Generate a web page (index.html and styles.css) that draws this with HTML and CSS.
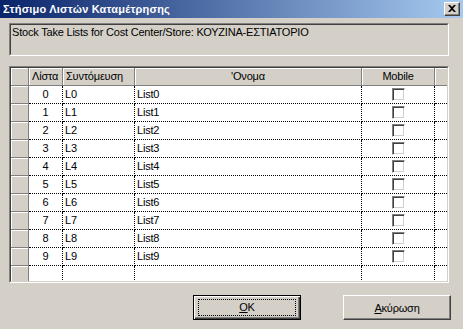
FILE: index.html
```html
<!DOCTYPE html>
<html lang="el">
<head>
    <meta charset="UTF-8">
    <title>Στήσιμο Λιστών Καταμέτρησης</title>
    <link rel="stylesheet" href="styles.css">
</head>
<body>
    <div class="titlebar">
        <span class="title">Στήσιμο Λιστών Καταμέτρησης</span>
        <span class="close-btn">
            <svg width="8" height="7" viewBox="0 0 8 7"><path d="M0 0h2l2 2 2-2h2L5 3.5 8 7H6L4 5 2 7H0l3-3.5z" fill="#000"/></svg>
        </span>
    </div>
    <div class="content">
        <div class="sunken info-box">
            <div class="sunken-inner info-text">Stock Take Lists for Cost Center/Store: ΚΟΥΖΙΝΑ-ΕΣΤΙΑΤΟΡΙΟ</div>
        </div>
        <div class="sunken grid-box">
            <div class="sunken-inner grid">
                <div class="row head">
                    <div class="cell hcell"></div>
                    <div class="cell hcell clip">Λίστα</div>
                    <div class="cell hcell left">Συντόμευση</div>
                    <div class="cell hcell">'Ονομα</div>
                    <div class="cell hcell">Mobile</div>
                    <div class="cell hcell filler"></div>
                </div>
                <div id="rows"></div>
            </div>
        </div>
        <div class="buttons">
            <div class="btn default"><span class="focus"><u>O</u>K</span></div>
            <div class="btn"><span><u>Α</u>κύρωση</span></div>
        </div>
    </div>
    <script>
        const rows = document.getElementById('rows');
        for (let i = 0; i < 11; i++) {
            const empty = i === 10;
            rows.innerHTML += `
                <div class="row">
                    <div class="cell hcell"></div>
                    <div class="cell dcell center">${empty ? '' : i}</div>
                    <div class="cell dcell">${empty ? '' : 'L' + i}</div>
                    <div class="cell dcell">${empty ? '' : 'List' + i}</div>
                    <div class="cell dcell center">${empty ? '' : '<span class="check"></span>'}</div>
                    <div class="cell dcell filler"></div>
                </div>`;
        }
    </script>
</body>
</html>
```

FILE: styles.css
```css
body {
    margin: 0;
    width: 463px;
    height: 329px;
    overflow: hidden;
    background-color: #d4d0c8;
    color: #000;
    font-family: "Liberation Sans", Arial, sans-serif;
    font-size: 11px;
    letter-spacing: -0.2px;
}
.titlebar {
    height: 18px;
    display: flex;
    align-items: center;
    justify-content: space-between;
    padding: 0 3px 0 3px;
    background: linear-gradient(to right, #0a246a, #a6caf0);
}
.title {
    color: #fff;
    font-weight: bold;
    font-size: 11px;
    letter-spacing: 0.2px;
    margin-top: -1px;
}
.close-btn {
    box-sizing: border-box;
    width: 16px;
    height: 14px;
    display: flex;
    align-items: center;
    justify-content: center;
    background-color: #d4d0c8;
    border: 1px solid;
    border-color: #fff #404040 #404040 #fff;
    box-shadow: inset -1px -1px #808080;
    margin-top: -1px;
}
.content {
    padding: 5px 14px 0 9px;
}
.sunken {
    box-sizing: border-box;
    border: 1px solid;
    border-color: #808080 #fff #fff #808080;
}
.sunken-inner {
    box-sizing: border-box;
    height: 100%;
    border: 1px solid;
    border-color: #404040 #d4d0c8 #d4d0c8 #404040;
}
.info-box {
    height: 33px;
    margin-bottom: 10px;
}
.info-text {
    padding: 1px 0 0 1px;
    line-height: 13px;
}
.grid-box {
    height: 217px;
    margin-bottom: 12px;
}
.grid {
    overflow: hidden;
    background-color: #d4d0c8;
}
.row {
    display: grid;
    grid-template-columns: 18px 34px 72px 227px 73px 1fr;
    height: 18px;
}
.cell {
    box-sizing: border-box;
    height: 18px;
    line-height: 17px;
    white-space: nowrap;
    overflow: hidden;
}
.hcell {
    background-color: #d4d0c8;
    border-right: 1px solid #808080;
    border-bottom: 1px solid #808080;
    box-shadow: inset 1px 1px #fff;
    text-align: center;
}
.hcell.clip {
    text-align: left;
    padding-left: 3px;
}
.hcell.left {
    text-align: left;
    padding-left: 3px;
}
.dcell {
    background-color: #fff;
    border-right: 1px dotted #000;
    border-bottom: 1px dotted #000;
    padding-left: 2px;
}
.dcell.center {
    text-align: center;
    padding-left: 0;
}
.filler {
    border-right: none;
}
.check {
    display: inline-block;
    box-sizing: border-box;
    width: 13px;
    height: 13px;
    vertical-align: -3px;
    background-color: #fff;
    border: 1px solid;
    border-color: #808080 #fff #fff #808080;
    box-shadow: inset 1px 1px #404040, inset -1px -1px #d4d0c8;
}
.buttons {
    display: flex;
    justify-content: flex-end;
    gap: 42px;
    margin-right: -2px;
}
.btn {
    box-sizing: border-box;
    width: 108px;
    height: 25px;
    display: flex;
    align-items: center;
    justify-content: center;
    border: 1px solid;
    border-color: #fff #404040 #404040 #fff;
    box-shadow: inset -1px -1px #808080;
}
.btn.default {
    border: 1px solid #000;
    box-shadow: inset 1px 1px #fff, inset -1px -1px #404040, inset -2px -2px #808080;
}
.focus {
    box-sizing: border-box;
    width: 98px;
    height: 17px;
    line-height: 15px;
    text-align: center;
    border: 1px dotted #000;
}
```
